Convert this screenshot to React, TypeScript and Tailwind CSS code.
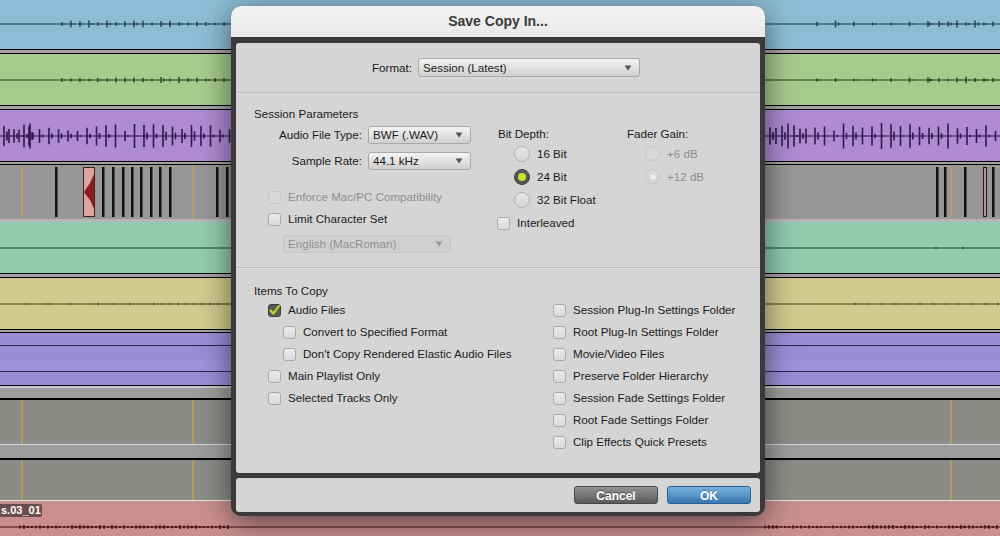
import React from "react";

// deterministic pseudo random so the waveforms stay the same every render
function rng(seed: number) {
  let s = seed;
  return () => {
    s = (s * 9301 + 49297) % 233280;
    return s / 233280;
  };
}

type Range = [number, number, number]; // start, end, step

function spikes(seed: number, ranges: Range[], amp: number, cy: number) {
  const r = rng(seed);
  let d = "";
  for (const [a, b, step] of ranges) {
    for (let x = a; x < b; x += step) {
      const h = amp * (0.35 + 0.65 * r());
      d += `M${x} ${(cy - h).toFixed(1)}V${(cy + h).toFixed(1)}`;
      const h2 = h * 0.5 * r();
      d += `M${x + 3} ${(cy - h2).toFixed(1)}V${(cy + h2).toFixed(1)}`;
    }
  }
  return d;
}

function Wave({
  h,
  cy,
  color,
  d,
  sw = 1.4,
}: {
  h: number;
  cy: number;
  color: string;
  d: string;
  sw?: number;
}) {
  return (
    <svg width="1000" height={h} className="block">
      <line x1="0" y1={cy} x2="1000" y2={cy} stroke={color} strokeWidth="1.2" />
      <path d={d} stroke={color} strokeWidth={sw} fill="none" />
    </svg>
  );
}

function Sep({ h = 5 }: { h?: number }) {
  return <div className="border-y border-black bg-[#a3a3a3]" style={{ height: h }} />;
}

const BARS_L = [56, 103, 113, 123, 132, 141, 151, 160, 170, 217, 227];
const BARS_R = [937, 945, 965, 993];
const MARKERS = [22, 193, 951];

function ClipTrack() {
  return (
    <svg width="1000" height="54" className="block">
      {MARKERS.map((x) => (
        <line key={x} x1={x} y1="0" x2={x} y2="54" stroke="#d7a640" strokeWidth="1" />
      ))}
      {[...BARS_L, ...BARS_R].map((x) => (
        <rect key={x} x={x - 1} y="2" width="2.5" height="50" fill="#111" />
      ))}
      <rect x="83.5" y="2.5" width="11" height="49" fill="#dca5a3" stroke="#4a1f1f" />
      <path d="M94 9 L90 18 L86 24 L84 27 L86 30 L90 35 L94 44 Z" fill="#8a1f1f" />
      <rect x="983.5" y="2.5" width="3" height="49" fill="#b49090" stroke="#2a1a1a" />
    </svg>
  );
}

function GreyTrack({ h }: { h: number }) {
  return (
    <div className="bg-[#8a8c88]" style={{ height: h }}>
      <svg width="1000" height={h} className="block">
        {MARKERS.map((x) => (
          <line key={x} x1={x} y1="0" x2={x} y2={h} stroke="#d7a640" strokeWidth="1.2" />
        ))}
      </svg>
    </div>
  );
}

function Background() {
  const blueD = spikes(3, [[62, 232, 9], [817, 930, 18.5], [930, 1000, 9]], 3.5, 24);
  const greenD = spikes(7, [[62, 232, 9], [817, 930, 18.5], [930, 1000, 9]], 3.2, 26);
  const purpleD = spikes(11, [[4, 30, 5], [30, 232, 9.5], [770, 810, 6], [815, 1000, 9.5]], 13, 26);
  const yellowD = spikes(5, [[26, 90, 22], [90, 232, 8], [855, 1000, 13]], 1.5, 26);
  const pinkD = spikes(13, [[20, 232, 4], [765, 1000, 4]], 2, 26);

  return (
    <div className="flex flex-col">
      <div className="h-[49px] bg-[#8dbdd5]">
        <Wave h={49} cy={24} color="#1d3b4b" d={blueD} />
      </div>
      <Sep />
      <div className="h-[51px] bg-[#a7cb8d]">
        <Wave h={51} cy={26} color="#24401c" d={greenD} />
      </div>
      <Sep />
      <div className="h-[51px] bg-[#ae8bd3]">
        <Wave h={51} cy={26} color="#2e1a4c" d={purpleD} sw={1.6} />
      </div>
      <Sep h={4} />
      <div className="h-[54px] bg-[#979797]">
        <ClipTrack />
      </div>
      <div className="h-[3px] bg-[#b5b5b5]" />
      <div className="h-[51px] bg-[#92cbaf]">
        <Wave h={51} cy={26} color="#1e4632" d="M278 25V27M680 25V27M690 25V27M936 25V27M963 25V27" />
      </div>
      <Sep />
      <div className="h-[51px] bg-[#d3ca8f]">
        <Wave h={51} cy={26} color="#4a4320" d={yellowD} sw={1} />
      </div>
      <Sep h={4} />
      <div className="h-[52px] bg-[#9a8dd6]">
        <div className="h-[12px]" />
        <div className="h-px bg-[#2c2450]" />
        <div className="mt-[13px] h-[12px] bg-[#9e92da]" />
        <div className="h-px bg-[#2c2450]" />
      </div>
      <div className="h-px bg-black" />
      <div className="h-[12px] border-t-2 border-[#c9c9c9] bg-[#9c9c9c]" />
      <div className="h-[2px] bg-black" />
      <GreyTrack h={44} />
      <div className="h-[14px] border-t border-[#d4d4d4] bg-[#9d9d9d]" />
      <div className="h-[2px] bg-black" />
      <GreyTrack h={40} />
      <div className="h-px bg-[#e8e8e8]" />
      <div className="relative h-[35px] bg-[#c98f8e]">
        <Wave h={35} cy={26} color="#4a0c0c" d={pinkD} sw={1.6} />
        <div className="absolute left-0 top-[3px] h-[13px] rounded-r-[2px] bg-[#6c4c4c] px-[1px] text-[11px] font-bold leading-[13px] text-white">
          s.03_01
        </div>
      </div>
    </div>
  );
}

function Check({ checked, disabled }: { checked?: boolean; disabled?: boolean }) {
  if (checked) {
    return (
      <span className="flex h-[13px] w-[13px] shrink-0 items-center justify-center rounded-[3px] border border-[#3d3d3d] bg-[#5a5a5a]">
        <svg width="11" height="11" viewBox="0 0 11 11">
          <path d="M1.5 5.5 L4.3 8.6 L9.8 1.2" stroke="#b6e01f" strokeWidth="2.2" fill="none" strokeLinecap="round" strokeLinejoin="round" />
        </svg>
      </span>
    );
  }
  return (
    <span
      className={
        disabled
          ? "h-[13px] w-[13px] shrink-0 rounded-[3px] border border-[#c6c6c6] bg-[#d8d8d8]"
          : "h-[13px] w-[13px] shrink-0 rounded-[3px] border border-[#a9a9a9] bg-gradient-to-b from-[#ebebeb] to-[#dadada]"
      }
    />
  );
}

function CheckRow({
  label,
  checked,
  disabled,
  indent = "",
}: {
  label: string;
  checked?: boolean;
  disabled?: boolean;
  indent?: string;
}) {
  return (
    <div className={`flex h-[22px] items-center gap-[7px] ${indent}`}>
      <Check checked={checked} disabled={disabled} />
      <span className={disabled ? "text-[#8e8e8e]" : ""}>{label}</span>
    </div>
  );
}

function Radio({ on, disabled }: { on?: boolean; disabled?: boolean }) {
  if (disabled) {
    return (
      <span className="flex h-[15px] w-[15px] shrink-0 items-center justify-center rounded-full border border-[#c5c5c5] bg-[#d8d8d8]">
        {on && <span className="h-[8px] w-[8px] rounded-full border border-[#cfcfcf] bg-[#ececec]" />}
      </span>
    );
  }
  if (on) {
    return (
      <span className="flex h-[16px] w-[16px] shrink-0 items-center justify-center rounded-full border border-[#3f3f3f] bg-[#575757]">
        <span className="h-[8px] w-[8px] rounded-full bg-[#c4e62a]" />
      </span>
    );
  }
  return (
    <span className="h-[16px] w-[16px] shrink-0 rounded-full border border-[#b0b0b0] bg-gradient-to-b from-[#e6e6e6] to-[#d6d6d6]" />
  );
}

function RadioRow({ label, on, disabled }: { label: string; on?: boolean; disabled?: boolean }) {
  return (
    <div className="flex h-[23px] items-center gap-[7px]">
      <Radio on={on} disabled={disabled} />
      <span className={disabled ? "text-[#8e8e8e]" : ""}>{label}</span>
    </div>
  );
}

function Select({ value, w, disabled, h = "h-[18px]" }: { value: string; w: string; disabled?: boolean; h?: string }) {
  return (
    <div
      className={
        disabled
          ? `flex ${h} ${w} items-center justify-between rounded-[3px] border border-[#c4c4c4] bg-[#cfcfcf] pl-[4px] pr-[7px] text-[#8f8f8f]`
          : `flex ${h} ${w} items-center justify-between rounded-[3px] border border-[#a8a8a8] bg-gradient-to-b from-[#f4f4f4] to-[#d0d0d0] pl-[4px] pr-[7px] text-[#1a1a1a]`
      }
    >
      <span>{value}</span>
      <svg width="8" height="6" viewBox="0 0 8 6">
        <path d="M0.5 0.5 H7.5 L4 5.5 Z" fill={disabled ? "#9a9a9a" : "#555"} />
      </svg>
    </div>
  );
}

function Divider() {
  return <div className="h-[2px] border-t border-[#bcbcbc] bg-[#dcdcdc]" />;
}

function Dialog() {
  return (
    <div className="absolute left-[231px] top-[6px] flex h-[510px] w-[534px] flex-col rounded-[10px] bg-[#3a3a3a] shadow-[0_6px_30px_rgba(0,0,0,0.55)]">
      <div className="flex h-[31px] items-center justify-center rounded-t-[10px] bg-gradient-to-b from-[#f3f3f3] to-[#e9e9e9] text-[14px] font-bold text-[#3a3a3a]">
        Save Copy In...
      </div>

      <div className="mx-[5px] mt-[6px] flex h-[430px] flex-col rounded-[3px] bg-[#d5d5d5] text-[11.6px] leading-[14px] text-[#1a1a1a]">
        {/* Format */}
        <div className="flex h-[49px] items-start gap-[6px] pl-[136px] pt-[15px]">
          <span className="leading-[19px]">Format:</span>
          <Select value="Session (Latest)" w="w-[222px]" h="h-[19px]" />
        </div>
        <Divider />

        {/* Session Parameters */}
        <div className="flex h-[173px] pl-[18px]">
          <div className="flex w-[244px] flex-col pt-[13px]">
            <span>Session Parameters</span>
            <div className="mt-[5px] flex items-center gap-[6px]">
              <span className="w-[108px] text-right">Audio File Type:</span>
              <Select value="BWF (.WAV)" w="w-[103px]" />
            </div>
            <div className="mt-[8px] flex items-center gap-[6px]">
              <span className="w-[108px] text-right">Sample Rate:</span>
              <Select value="44.1 kHz" w="w-[103px]" />
            </div>
            <div className="mt-[16px] pl-[14px]">
              <CheckRow label="Enforce Mac/PC Compatibility" disabled />
              <CheckRow label="Limit Character Set" />
            </div>
            <div className="mt-[5px] pl-[29px]">
              <Select value="English (MacRoman)" w="w-[168px]" disabled />
            </div>
          </div>

          <div className="flex w-[129px] flex-col pt-[33px]">
            <span>Bit Depth:</span>
            <div className="mt-[1px] pl-[16px]">
              <RadioRow label="16 Bit" />
              <RadioRow label="24 Bit" on />
              <RadioRow label="32 Bit Float" />
            </div>
            <CheckRow label="Interleaved" indent="mt-[1px] -ml-[1px]" />
          </div>

          <div className="flex flex-col pt-[33px]">
            <span>Fader Gain:</span>
            <div className="mt-[1px] pl-[18px]">
              <RadioRow label="+6 dB" disabled />
              <RadioRow label="+12 dB" on disabled />
            </div>
          </div>
        </div>
        <Divider />

        {/* Items To Copy */}
        <div className="flex pl-[18px]">
          <div className="flex w-[299px] flex-col pt-[15px]">
            <span>Items To Copy</span>
            <div className="mt-[1px]">
              <CheckRow label="Audio Files" checked indent="pl-[14px]" />
              <CheckRow label="Convert to Specified Format" indent="pl-[29px]" />
              <CheckRow label="Don't Copy Rendered Elastic Audio Files" indent="pl-[29px]" />
              <CheckRow label="Main Playlist Only" indent="pl-[14px]" />
              <CheckRow label="Selected Tracks Only" indent="pl-[14px]" />
            </div>
          </div>
          <div className="flex flex-col pt-[30px]">
            <CheckRow label="Session Plug-In Settings Folder" />
            <CheckRow label="Root Plug-In Settings Folder" />
            <CheckRow label="Movie/Video Files" />
            <CheckRow label="Preserve Folder Hierarchy" />
            <CheckRow label="Session Fade Settings Folder" />
            <CheckRow label="Root Fade Settings Folder" />
            <CheckRow label="Clip Effects Quick Presets" />
          </div>
        </div>
      </div>

      {/* Footer */}
      <div className="mx-[5px] mt-[5px] flex h-[34px] items-center justify-end gap-[9px] rounded-[3px] bg-[#d5d5d5] pr-[9px] text-[12px] font-bold text-white">
        <button className="h-[18px] w-[84px] rounded-[3px] border border-[#474747] bg-gradient-to-b from-[#939393] to-[#5b5b5b] [text-shadow:0_-1px_0_rgba(0,0,0,0.4)]">
          Cancel
        </button>
        <button className="h-[18px] w-[84px] rounded-[3px] border border-[#2d5f8f] bg-gradient-to-b from-[#78b0de] to-[#3a78b3] [text-shadow:0_-1px_0_rgba(0,0,0,0.3)]">
          OK
        </button>
      </div>
    </div>
  );
}

export default function App() {
  return (
    <div className="relative h-[536px] w-[1000px] overflow-hidden font-['Liberation_Sans',Arial,sans-serif]">
      <Background />
      <Dialog />
    </div>
  );
}
